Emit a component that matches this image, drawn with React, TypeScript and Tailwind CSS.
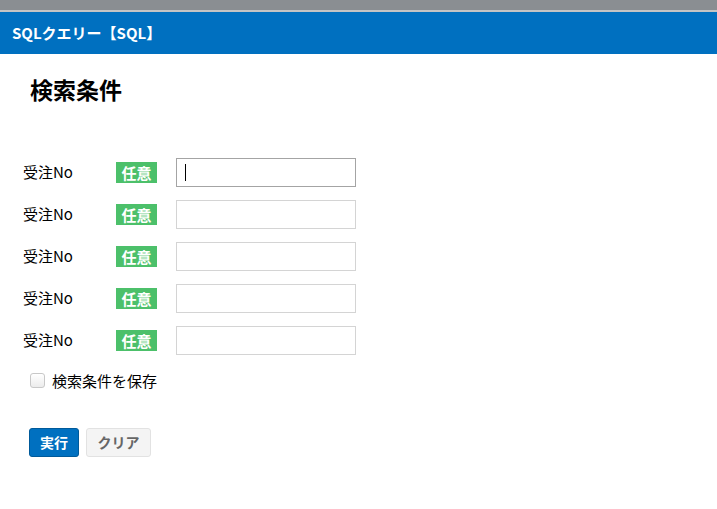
const font = "font-['Noto_Sans_CJK_JP','Noto_Sans',sans-serif]";

function Row({ focused }: { focused?: boolean }) {
  return (
    <div className="flex items-center h-[29px]">
      <span className="w-[93px] -mt-[3px] text-[15px] text-black leading-none">受注No</span>
      <span className="w-[41px] h-[21px] flex items-center justify-center bg-[#4cc06a] text-white text-[15px] font-bold leading-none">
        任意
      </span>
      <div
        className={`ml-[19px] w-[180px] h-[29px] bg-white border flex items-center ${
          focused ? "border-[#a4a4a4]" : "border-[#d4d4d4]"
        }`}
      >
        {focused && <span className="ml-[8px] w-px h-[17px] bg-black" />}
      </div>
    </div>
  );
}

export default function App() {
  return (
    <div className={`${font} w-[717px] h-[509px] bg-white overflow-hidden`}>
      <div className="h-[10px] bg-[#8a8e92]" />
      <div className="h-[2px] bg-[#c4c4c4]" />
      <div className="h-[42px] bg-[#0070c0] flex items-center px-[12px]">
        <h1 className="text-white text-[15px] font-bold">SQLクエリー【SQL】</h1>
      </div>
      <h2 className="ml-[30px] mt-[24px] text-[23px] font-bold text-black leading-none">検索条件</h2>
      <div className="ml-[23px] mt-[57px] flex flex-col gap-[13px]">
        <Row focused />
        <Row />
        <Row />
        <Row />
        <Row />
      </div>
      <label className="ml-[30px] mt-[18px] flex items-center gap-[7px]">
        <span className="w-[15px] h-[15px] rounded-[3px] border border-[#c8c8c8] bg-gradient-to-b from-white to-[#ececec]" />
        <span className="text-[15px] text-black leading-none">検索条件を保存</span>
      </label>
      <div className="ml-[29px] mt-[40px] flex gap-[7px]">
        <button className="w-[50px] h-[29px] rounded-[3px] bg-[#0070c0] border border-[#005a9a] text-white text-[14px] font-bold">
          実行
        </button>
        <button className="w-[65px] h-[29px] rounded-[3px] bg-[#f4f4f4] border border-[#e2e2e2] text-[#666] text-[14px] font-bold">
          クリア
        </button>
      </div>
    </div>
  );
}
